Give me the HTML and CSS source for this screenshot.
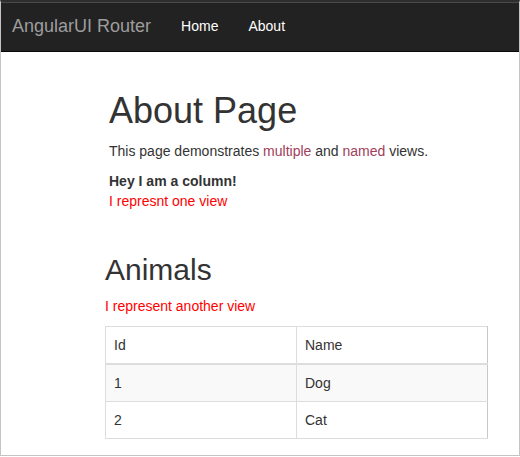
FILE: index.html
```html
<!DOCTYPE html>
<html>
<head>
<meta charset="utf-8">
<title>AngularUI Router</title>
<link rel="stylesheet" href="styles.css">
</head>
<body>
<div class="window">
  <nav class="navbar">
    <a class="brand" href="#">AngularUI Router</a>
    <ul class="nav">
      <li><a href="#">Home</a></li>
      <li><a href="#">About</a></li>
    </ul>
  </nav>
  <main class="container">
    <section class="about">
      <h1>About Page</h1>
      <p>This page demonstrates <a class="link" href="#">multiple</a> and <a class="link" href="#">named</a> views.</p>
      <div class="column">
        <strong>Hey I am a column!</strong>
        <div class="red">I represnt one view</div>
      </div>
    </section>
    <section class="animals">
      <h2>Animals</h2>
      <p class="red">I represent another view</p>
      <table class="table">
        <thead>
          <tr><th>Id</th><th>Name</th></tr>
        </thead>
        <tbody>
          <tr class="odd"><td>1</td><td>Dog</td></tr>
          <tr><td>2</td><td>Cat</td></tr>
        </tbody>
      </table>
    </section>
  </main>
</div>
</body>
</html>
```
FILE: styles.css
```css
html, body {
  margin: 0;
  padding: 0;
  background: #fff;
}
body {
  font-family: "Liberation Sans", Arial, sans-serif;
  font-size: 14px;
  line-height: 20px;
  color: #333;
}
.window {
  box-sizing: border-box;
  width: 520px;
  height: 456px;
  border-top: 2px solid #2e2e2e;
  border-left: 1px solid #c4c4c4;
  border-right: 1px solid #c4c4c4;
  border-bottom: 1px solid #c4c4c4;
  overflow: hidden;
}
.navbar {
  display: flex;
  align-items: flex-start;
  height: 50px;
  box-sizing: border-box;
  background: #222;
  border-top: 1px solid #4a4a4a;
  border-bottom: 1px solid #080808;
  padding-left: 11px;
}
.brand {
  font-size: 18px;
  line-height: 20px;
  color: #9d9d9d;
  text-decoration: none;
  padding: 13px 15px 0 0;
}
.nav {
  display: flex;
  list-style: none;
  margin: 0;
  padding: 0;
}
.nav a {
  display: block;
  color: #fff;
  text-decoration: none;
  padding: 13px 15px 0;
  line-height: 20px;
}
.container {
  padding: 39px 0 0 104px;
}
.about {
  padding-left: 4px;
}
h1 {
  font-size: 36px;
  font-weight: 500;
  line-height: 39.6px;
  margin: 0 0 10px;
}
h2 {
  font-size: 30px;
  font-weight: 500;
  line-height: 33px;
  margin: 42px 0 10px;
}
p {
  margin: 0 0 10px;
}
.link {
  color: #a0405a;
  text-decoration: none;
}
.red {
  color: #f00;
}
.column strong {
  display: block;
  font-weight: bold;
}
.table {
  width: 383px;
  border-collapse: collapse;
  border: 1px solid #ddd;
  border-right-color: #c8c8c8;
}
.table th, .table td {
  width: 50%;
  padding: 8px;
  text-align: left;
  font-weight: normal;
  border: 1px solid #ddd;
  line-height: 20px;
}
.table th:last-child, .table td:last-child {
  border-right-color: #c8c8c8;
}
.table thead th {
  border-bottom-width: 2px;
}
.table tr.odd {
  background: #f9f9f9;
}
```
